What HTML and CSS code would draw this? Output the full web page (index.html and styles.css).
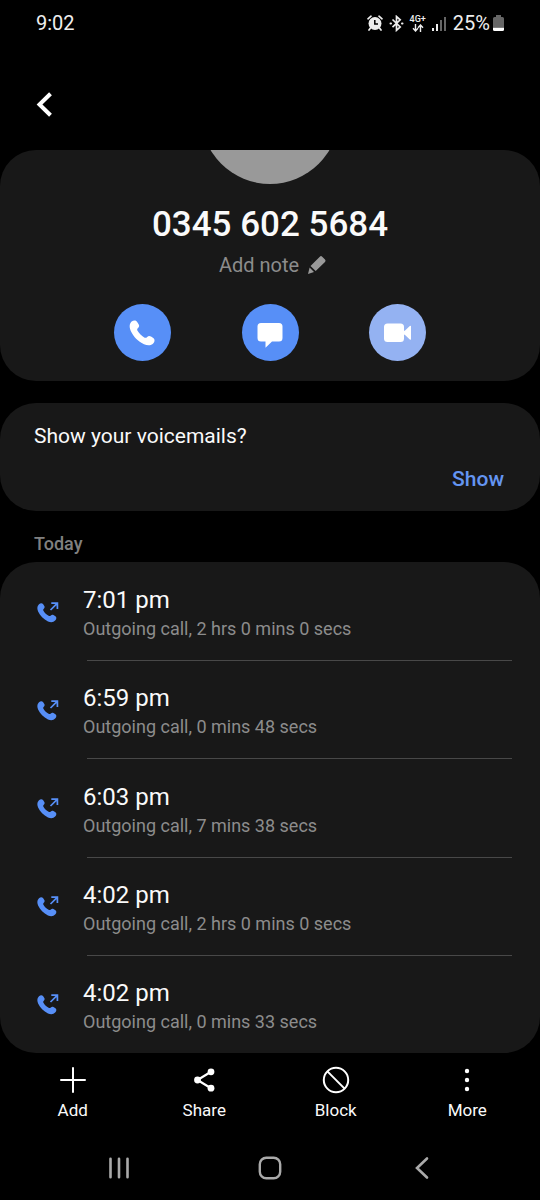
FILE: index.html
```html
<!DOCTYPE html>
<html lang="en">
<head>
<meta charset="utf-8">
<meta name="viewport" content="width=device-width, initial-scale=1">
<title>Call details</title>
<link rel="stylesheet" href="styles.css">
</head>
<body>
<svg class="sprite" aria-hidden="true">
  <symbol id="handset" viewBox="0 0 26 26"><path d="M2.600 1.600C4.400.1 6.800 0 8 1.700L9.600 4.200C10.600 5.700 10.200 7 9 8.100C7.900 9.200 8 9.900 8.700 11.100C10.200 13.700 12.400 15.800 15.200 17.400C16.400 18.100 17.100 18 18.200 16.900C19.300 15.800 20.500 15.600 22 16.500L24.300 18C26 19.200 25.900 21.600 24.400 23.300C22 25.900 18.500 25.800 15 24.200C9 21.500 4.400 16.700 1.800 11C.2 7.500.2 3.800 2.600 1.600Z"/></symbol>
  <symbol id="outgoing" viewBox="0 0 22 21"><path fill="currentColor" d="M2 2.300C3.400.9 5.200.9 6.200 2.300L7.300 4C7.900 5.100 7.600 6 6.800 6.800C6 7.600 6.100 8.200 6.600 9C7.800 11 9.400 12.600 11.600 13.800C12.500 14.300 13 14.200 13.800 13.500C14.700 12.700 15.500 12.500 16.500 13.100L18.400 14.300C19.700 15.200 19.600 17 18.400 18.300C16.400 20.600 13.700 20.600 11 19.400C6.600 17.500 3 13.900 1.100 9.600C-.1 6.900.1 4.200 2 2.300Z"/><path fill="none" stroke="currentColor" stroke-width="1.700" d="M13.500 8L20.200 1.300M14.300 1.100H20.400V7"/></symbol>
</svg>
<div class="screen">
  <header class="status">
    <time>9:02</time>
    <div class="status-icons">
      <svg width="16" height="17" viewBox="0 0 16 17" fill="none" stroke="#eee"><circle cx="8" cy="8.500" r="6.500" fill="#eee" stroke="none"/><path stroke="#000" stroke-width="1.500" d="M7.800 5V9H11"/><path stroke-width="1.700" stroke-linecap="round" d="M1 3.800L4 1.200M12 1.200L15 3.800M3.500 13L2 15M12.500 13L14 15"/></svg>
      <svg width="15" height="17" viewBox="0 0 15 17" fill="none" stroke="#eee" stroke-width="1.700"><path d="M3.500 4.500L11.200 12L7.500 15.300V1.500L11.200 4.800L3.500 12.200"/><path stroke-width="2" stroke-linecap="round" d="M1.500 8.400H2M13 8.400H13.500"/></svg>
      <span class="network"><span>4G+</span><svg width="12" height="8" viewBox="0 0 12 8" fill="none" stroke="#eee" stroke-width="1.400"><path d="M3.500 0V7M1 4.300L3.500 7L6 4.300M8.500 8V1M6 3.700L8.500 1L11 3.700"/></svg></span>
      <svg width="15" height="16" viewBox="0 0 15 16"><path fill="#eee" d="M0 13H2V16H0ZM4 9H6V16H4Z"/><path fill="#666" d="M8 5H10V16H8ZM12 2H14V16H12Z"/></svg>
      <span class="percent">25%</span>
      <svg width="11" height="16" viewBox="0 0 11 16"><path fill="#666" d="M3 0H8V2H9.500Q11 2 11 3.500V12H0V3.500Q0 2 1.500 2H3Z"/><path fill="#fff" d="M0 12.500H11V14.500Q11 16 9.500 16H1.500Q0 16 0 14.500Z"/></svg>
    </div>
  </header>

  <nav class="topbar">
    <button class="icon-button" aria-label="Navigate up"><svg width="18" height="26" viewBox="0 0 18 26" fill="none" stroke="#fff" stroke-width="4"><path d="M14.500 2.800L3.500 13.500L14.500 24.200"/></svg></button>
  </nav>

  <main class="content">
    <section class="card contact">
      <div class="avatar"></div>
      <h1>0345 602 5684</h1>
      <button class="note">Add note
        <svg width="20" height="20" viewBox="0 0 20 20" fill="#999"><path d="M12.800 1.700Q14 .5 15.200 1.700L18 4.500Q19.200 5.700 18 6.900L8.700 16.100L3.500 10.900Z"/><path d="M2.600 12.500L7 17L1 19Z"/></svg>
      </button>
      <div class="actions">
        <button class="round" aria-label="Call"><svg width="26" height="26" fill="#fff"><use href="#handset"/></svg></button>
        <button class="round" aria-label="Message"><svg width="26" height="30" viewBox="0 -4 26 30" fill="#fff"><path d="M4 1H22Q25.500 1 25.500 4.500V16Q25.500 19.500 22 19.500H15L8.500 25.700V19.500H4Q.5 19.500.5 16V4.500Q.5 1 4 1Z"/></svg></button>
        <button class="round faded" aria-label="Video call"><svg width="28" height="20" viewBox="0 0 28 20" fill="#fff"><rect x="0" y=".5" width="20" height="18.500" rx="3.500"/><path d="M19 8L20.800 7.700L25.800 3Q27 2.200 27 3.500V16Q27 17.300 25.800 16.500L20.800 11.800L19 11.500Z"/></svg></button>
      </div>
    </section>

    <section class="card voicemail">
      <p>Show your voicemails?</p>
      <button class="show">Show</button>
    </section>

    <h2>Today</h2>
    <ul class="card calls">
      <li><svg class="direction"><use href="#outgoing"/></svg><div class="call"><strong>7:01 pm</strong><span>Outgoing call, 2 hrs 0 mins 0 secs</span></div></li>
      <li><svg class="direction"><use href="#outgoing"/></svg><div class="call"><strong>6:59 pm</strong><span>Outgoing call, 0 mins 48 secs</span></div></li>
      <li><svg class="direction"><use href="#outgoing"/></svg><div class="call"><strong>6:03 pm</strong><span>Outgoing call, 7 mins 38 secs</span></div></li>
      <li><svg class="direction"><use href="#outgoing"/></svg><div class="call"><strong>4:02 pm</strong><span>Outgoing call, 2 hrs 0 mins 0 secs</span></div></li>
      <li><svg class="direction"><use href="#outgoing"/></svg><div class="call"><strong>4:02 pm</strong><span>Outgoing call, 0 mins 33 secs</span></div></li>
    </ul>
  </main>

  <nav class="toolbar">
    <button><svg width="28" height="28" viewBox="0 0 28 28" fill="none" stroke="#fff" stroke-width="2" stroke-linecap="round"><path d="M14 2V26M2 14H26"/></svg>Add</button>
    <button><svg width="28" height="28" viewBox="0 0 28 28" fill="#fff"><path fill="none" stroke="#fff" stroke-width="2.200" d="M21 5.800L7.500 14L21 22.200"/><circle cx="21" cy="5.800" r="3.400"/><circle cx="7.500" cy="14" r="3.400"/><circle cx="21" cy="22.200" r="3.400"/></svg>Share</button>
    <button><svg width="28" height="28" viewBox="0 0 28 28" fill="none" stroke="#fff" stroke-width="2"><circle cx="14" cy="14" r="12.200"/><path d="M5.400 5.400L22.600 22.600"/></svg>Block</button>
    <button><svg width="28" height="28" viewBox="0 0 28 28" fill="#fff"><circle cx="14" cy="5" r="2.200"/><circle cx="14" cy="14" r="2.200"/><circle cx="14" cy="23" r="2.200"/></svg>More</button>
  </nav>

  <nav class="system">
    <button aria-label="Recent apps"><svg width="24" height="24" viewBox="0 0 24 24" stroke="#aaa" stroke-width="2.600" stroke-linecap="round"><path d="M3.500 2.800V21.200M12 2.800V21.200M20.500 2.800V21.200"/></svg></button>
    <button aria-label="Home"><svg width="24" height="24" viewBox="0 0 24 24" fill="none" stroke="#aaa" stroke-width="2.400"><rect x="1.800" y="1.800" width="20.400" height="20.400" rx="6.500"/></svg></button>
    <button aria-label="Back"><svg width="24" height="24" viewBox="0 0 24 24" fill="none" stroke="#aaa" stroke-width="2.600" stroke-linecap="round"><path d="M18 2.500L8 12L18 21.500"/></svg></button>
  </nav>
</div>
</body>
</html>
```
FILE: styles.css
```css
* { box-sizing: border-box; }

body {
  margin: 0;
  background: #000;
  color: #fafafa;
  font-family: Roboto, "Noto Sans", sans-serif;
}

button {
  margin: 0;
  padding: 0;
  border: 0;
  background: none;
  color: inherit;
  font: inherit;
  cursor: pointer;
}

svg { display: block; flex: none; }
.sprite { display: none; }

.screen {
  display: flex;
  flex-direction: column;
  min-height: 100vh;
}

.status {
  display: flex;
  align-items: center;
  justify-content: space-between;
  height: 46px;
  padding: 0 36px;
  font-size: 20px;
  color: #eee;
}

.status-icons { display: flex; align-items: center; gap: 6px; }
.percent { margin-right: -3px; }

.network {
  display: flex;
  flex-direction: column;
  align-items: center;
  font-size: 9px;
  font-weight: 500;
  line-height: 9px;
}

.topbar {
  display: flex;
  align-items: center;
  height: 104px;
  padding: 12px 36px 0;
}

.content { display: flex; flex: 1; flex-direction: column; }

.card {
  margin: 0;
  border-radius: 36px;
  background: #181818;
}

.contact {
  display: flex;
  flex-direction: column;
  align-items: center;
  overflow: hidden;
  padding-bottom: 20px;
}

.avatar {
  width: 138px;
  height: 138px;
  margin-top: -104px;
  border-radius: 50%;
  background: #999;
}

h1 {
  margin: 21px 0 0;
  font-size: 35px;
  font-weight: 500;
  line-height: 40px;
}

.note {
  display: flex;
  align-items: center;
  gap: 8px;
  margin-top: 8px;
  padding-left: 6px;
  color: #8c8c8c;
  font-size: 20px;
  line-height: 24px;
}

.actions {
  display: flex;
  justify-content: space-evenly;
  width: 100%;
  padding: 0 43px;
  margin-top: 27px;
}

.round {
  display: grid;
  place-items: center;
  width: 57px;
  height: 57px;
  border-radius: 50%;
  background: #578ff7;
}

.faded { background: #94b2f2; }

.voicemail {
  display: flex;
  flex-direction: column;
  margin-top: 22px;
  padding: 21px 36px 20px 34px;
  font-size: 21px;
  line-height: 24px;
}

.voicemail p { margin: 0; }

.show {
  align-self: flex-end;
  margin-top: 19px;
  color: #6495f2;
  font-weight: 500;
}

h2 {
  margin: 21px 34px 6px;
  color: #808080;
  font-size: 18px;
  font-weight: 500;
  line-height: 24px;
}

.calls {
  display: flex;
  flex: 1;
  flex-direction: column;
  padding: 0 28px 0 37px;
  list-style: none;
}

.calls li {
  display: flex;
  flex: 1;
  align-items: center;
  gap: 24px;
  position: relative;
  min-height: 98px;
  padding-top: 2px;
}

.calls li + li::before {
  content: "";
  position: absolute;
  top: 0;
  right: 0;
  left: 50px;
  border-top: 1px solid #484848;
}

.direction { width: 22px; height: 21px; color: #578ff7; }

.call {
  display: flex;
  flex-direction: column;
  gap: 2px;
  padding-top: 4px;
}

.call strong { font-size: 24px; font-weight: 400; line-height: 28px; }
.call span { color: #8c8c8c; font-size: 18px; line-height: 26px; }

.toolbar {
  display: grid;
  grid-template-columns: repeat(4, 1fr);
  height: 82px;
  padding: 13px 7px 0;
}

.toolbar button {
  display: flex;
  flex-direction: column;
  align-items: center;
  gap: 6px;
  font-size: 17px;
  line-height: 20px;
}

.system {
  display: flex;
  align-items: center;
  justify-content: space-between;
  height: 65px;
  padding: 0 107px;
}
```
